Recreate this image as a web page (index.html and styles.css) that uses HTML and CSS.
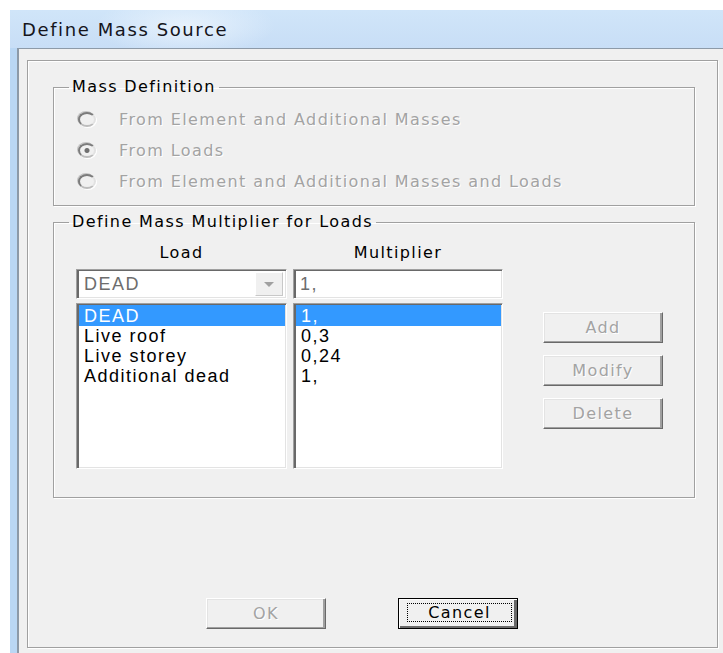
FILE: index.html
```html
<!DOCTYPE html>
<html lang="en">
<head>
<meta charset="utf-8">
<title>Define Mass Source</title>
<link rel="stylesheet" href="styles.css">
</head>
<body>
<div class="window">
  <div class="titlebar"><span class="title">Define Mass Source</span></div>
  <div class="client">
    <div class="panel">
      <fieldset class="group group-mass">
        <legend>Mass Definition</legend>
        <div class="radios">
          <div class="radio"><span class="bullet"></span><span>From Element and Additional Masses</span></div>
          <div class="radio"><span class="bullet checked"></span><span>From Loads</span></div>
          <div class="radio"><span class="bullet"></span><span>From Element and Additional Masses and Loads</span></div>
        </div>
      </fieldset>

      <fieldset class="group group-mult">
        <legend>Define Mass Multiplier for Loads</legend>
        <div class="mult-grid">
          <div class="col-head head-load">Load</div>
          <div class="col-head head-mult">Multiplier</div>
          <div class="combo sunken">
            <span class="combo-text">DEAD</span>
            <span class="combo-arrow"><span class="tri"></span></span>
          </div>
          <div class="edit sunken">1,</div>
          <ul class="list list-load sunken">
            <li class="sel">DEAD</li>
            <li>Live roof</li>
            <li>Live storey</li>
            <li>Additional dead</li>
          </ul>
          <ul class="list list-mult sunken">
            <li class="sel">1,</li>
            <li>0,3</li>
            <li>0,24</li>
            <li>1,</li>
          </ul>
          <div class="side-buttons">
            <button class="btn" disabled>Add</button>
            <button class="btn" disabled>Modify</button>
            <button class="btn" disabled>Delete</button>
          </div>
        </div>
      </fieldset>

      <div class="footer">
        <button class="btn" disabled>OK</button>
        <button class="btn default"><span class="focus">Cancel</span></button>
      </div>
    </div>
  </div>
</div>
</body>
</html>
```

FILE: styles.css
```css
* {
  box-sizing: border-box;
}

html,
body {
  margin: 0;
  padding: 0;
  background: #ffffff;
  overflow: hidden;
}

body {
  width: 723px;
  height: 653px;
}

/* Window frame */
.window {
  margin: 10px 0 0 10px;
  width: 720px;
  height: 650px;
  display: flex;
  flex-direction: column;
  background: #bad7f4;
}

.titlebar {
  flex: none;
  height: 38px;
  display: flex;
  align-items: center;
  padding-left: 12px;
  background:
    radial-gradient(ellipse 90px 30px at 175px 16px, rgba(235, 244, 253, 0.85), rgba(235, 244, 253, 0) 100%),
    linear-gradient(180deg, #d0e5f9 0%, #c8def6 100%);
}

.title {
  font-family: "DejaVu Sans", sans-serif;
  font-size: 18px;
  letter-spacing: 1.6px;
  color: #15151c;
}

.client {
  flex: 1;
  margin-left: 7px;
  background: #f0f0f0;
  border-top: 1px solid #8d9aa8;
  border-left: 2px solid #8d9aa8;
  padding: 11px 0 0 8px;
}

/* Etched inner frame */
.panel {
  width: 691px;
  height: 588px;
  border: 1px solid #a0a0a0;
  box-shadow: inset 1px 1px 0 #ffffff, 1px 1px 0 #ffffff;
  padding: 17px 0 0 25px;
  display: flex;
  flex-direction: column;
  font-family: "DejaVu Sans", sans-serif;
  font-size: 16px;
  letter-spacing: 1.4px;
  color: #000;
}

/* Group boxes */
.group {
  margin: 0;
  padding: 0;
  width: 642px;
  border: 1px solid #a0a0a0;
  box-shadow: inset 1px 1px 0 #ffffff, 1px 1px 0 #ffffff;
  min-inline-size: 0;
}

.group legend {
  margin-left: 15px;
  padding: 0 3px;
  line-height: 18px;
}

.group-mass {
  height: 128px;
}

.group-mult {
  height: 285px;
  margin-top: 7px;
}

/* Radio options */
.radios {
  padding: 8px 0 0 24px;
}

.radio {
  display: flex;
  align-items: center;
  height: 31px;
  color: #a3a3a3;
  text-shadow: 1px 1px 0 #ffffff;
}

.bullet {
  flex: none;
  width: 18px;
  height: 15px;
  margin-right: 23px;
  border-radius: 50%;
  border: 2px solid;
  border-color: #7c7c7c #e2e2e2 #bdbdbd #7c7c7c;
  background: #f0f0f0;
  box-shadow: 1px 1px 0 #ffffff, -1px -1px 0 #c4c4c4;
}

.bullet.checked {
  background: radial-gradient(ellipse 3px 3px at 50% 50%, #707070 0, #707070 2px, #f0f0f0 3px);
}

/* Load / multiplier editor */
.mult-grid {
  display: grid;
  grid-template-columns: 211px 210px 154px;
  grid-template-rows: 20px 36px 170px;
  column-gap: 6px;
  padding: 12px 0 0 22px;
}

.col-head {
  grid-row: 1;
  text-align: center;
  line-height: 20px;
}

.head-load {
  grid-column: 1;
}

.head-mult {
  grid-column: 2;
}

.combo,
.edit {
  grid-row: 2;
  margin-top: 6px;
  height: 30px;
  background: #ffffff;
  color: #6d6d6d;
  font-family: "Liberation Sans", Arial, sans-serif;
  font-size: 18px;
  letter-spacing: 1.5px;
  display: flex;
  align-items: center;
}

.combo {
  grid-column: 1;
  padding-left: 7px;
  justify-content: space-between;
}

.edit {
  grid-column: 2;
  padding-left: 6px;
}

.combo-arrow {
  width: 28px;
  height: 24px;
  margin-right: 3px;
  background: #f0f0f0;
  border: 1px solid;
  border-color: #ffffff #c8c8c8 #c8c8c8 #ffffff;
  display: flex;
  align-items: center;
  justify-content: center;
}

.tri {
  width: 0;
  height: 0;
  border-left: 5px solid transparent;
  border-right: 5px solid transparent;
  border-top: 5px solid #a0a0a0;
}

.sunken {
  border: 1px solid;
  border-color: #a0a0a0 #ffffff #ffffff #a0a0a0;
  box-shadow: inset 2px 1px 0 #696969, inset -1px -1px 0 #e3e3e3;
}

.list {
  grid-row: 3;
  margin: 4px 0 0 0;
  height: 166px;
  padding: 1px 1px 0 2px;
  list-style: none;
  background: #ffffff;
  font-family: "Liberation Sans", Arial, sans-serif;
  font-size: 18px;
  letter-spacing: 1.5px;
}

.list-load {
  grid-column: 1;
}

.list-mult {
  grid-column: 2;
}

.list li {
  height: 20px;
  line-height: 20px;
  padding-left: 5px;
}

.list li.sel {
  height: 21px;
  line-height: 22px;
  background: #3399ff;
  color: #ffffff;
}

.side-buttons {
  grid-column: 3;
  grid-row: 3;
  margin-left: 34px;
  padding-top: 13px;
  display: flex;
  flex-direction: column;
  gap: 12px;
}

/* Push buttons */
.btn {
  width: 120px;
  height: 31px;
  padding: 0;
  background: #f0f0f0;
  border: 1px solid;
  border-color: #ffffff #696969 #696969 #ffffff;
  box-shadow: inset -2px -1px 0 #a0a0a0, inset 1px 1px 0 #e3e3e3;
  font-family: "DejaVu Sans", sans-serif;
  font-size: 16px;
  letter-spacing: 1.4px;
  color: #a3a3a3;
  text-shadow: 1px 1px 0 #ffffff;
}

.btn.default {
  border: 1px solid #000000;
  box-shadow: inset 1px 1px 0 #ffffff, inset -3px -2px 0 #696969;
  color: #000000;
  text-shadow: none;
  display: flex;
  padding: 4px 5px 6px 8px;
}

.focus {
  flex: 1;
  border: 1px dotted #000000;
  line-height: 18px;
}

.footer {
  display: flex;
  gap: 72px;
  margin-top: 100px;
  padding-left: 153px;
}
```
